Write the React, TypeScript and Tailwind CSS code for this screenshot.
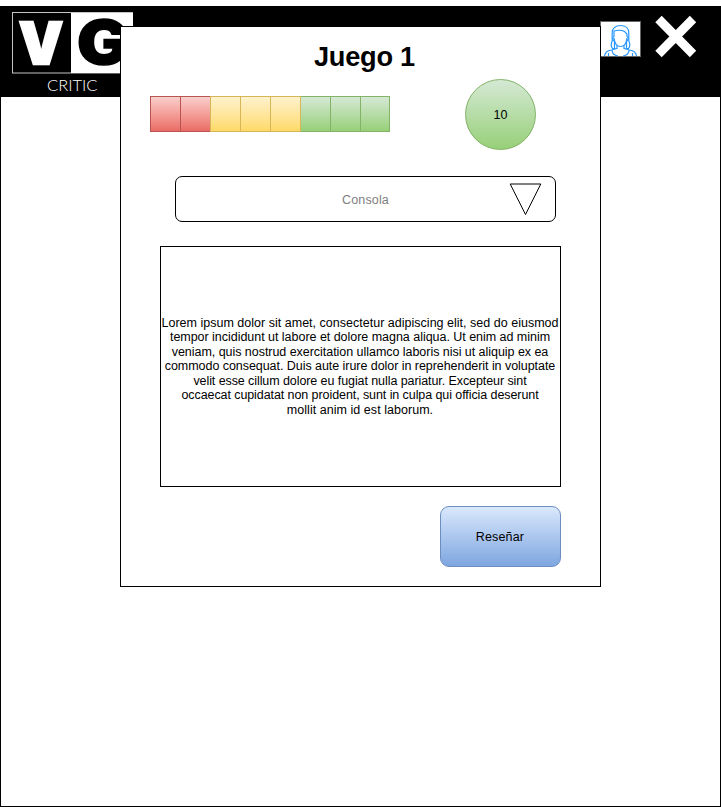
const segments = [
  'w-[30px] border-l border-[#b85450] from-[#f8cecc] to-[#ea6b66] border-y',
  'w-[30px] border-l border-[#b85450] from-[#f8cecc] to-[#ea6b66] border-y',
  'w-[30px] border-l border-[#d6b656] from-[#fff2cc] to-[#ffd966] border-y',
  'w-[30px] border-l border-[#d6b656] from-[#fff2cc] to-[#ffd966] border-y',
  'w-[31px] border-x border-[#d6b656] from-[#fff2cc] to-[#ffd966] border-y',
  'w-[29px] border-[#82b366] from-[#d5e8d4] to-[#97d077] border-y',
  'w-[30px] border-l border-[#82b366] from-[#d5e8d4] to-[#97d077] border-y',
  'w-[30px] border-x border-[#82b366] from-[#d5e8d4] to-[#97d077] border-y',
];

const loremLines = [
  { text: 'Lorem ipsum dolor sit amet, consectetur adipiscing elit, sed do eiusmod', tracking: 'tracking-[0.015px]' },
  { text: 'tempor incididunt ut labore et dolore magna aliqua. Ut enim ad minim', tracking: 'tracking-[-0.03px]' },
  { text: 'veniam, quis nostrud exercitation ullamco laboris nisi ut aliquip ex ea', tracking: 'tracking-[-0.04px]' },
  { text: 'commodo consequat. Duis aute irure dolor in reprehenderit in voluptate', tracking: 'tracking-[-0.05px]' },
  { text: 'velit esse cillum dolore eu fugiat nulla pariatur. Excepteur sint', tracking: 'tracking-[-0.08px]' },
  { text: 'occaecat cupidatat non proident, sunt in culpa qui officia deserunt', tracking: 'tracking-[-0.08px]' },
  { text: 'mollit anim id est laborum.', tracking: 'tracking-[0.04px]' },
];

function Logo() {
  return (
    <svg width="140" height="90" viewBox="0 6 140 90" className="block shrink-0">
      <rect x="12.5" y="12.5" width="120" height="60.5" fill="#000" stroke="#c4c4c4" />
      <rect x="71" y="13" width="62" height="60" fill="#fff" />
      <text x="19" y="63.5" textLength="44" lengthAdjust="spacingAndGlyphs" fill="#fff" stroke="#fff" strokeWidth="2.5" className="font-['Inter',sans-serif] text-[58px] font-black">V</text>
      <text x="77" y="64" textLength="52" lengthAdjust="spacingAndGlyphs" fill="#000" stroke="#000" strokeWidth="1.5" className="font-['Inter',sans-serif] text-[60px] font-black">G</text>
      <text x="47" y="90.5" textLength="50.5" lengthAdjust="spacingAndGlyphs" fill="#fff" className="font-['Lato',sans-serif] text-[15px] font-light">CRITIC</text>
    </svg>
  );
}

function Avatar() {
  return (
    <svg width="41" height="36" viewBox="0 0 41 36" className="block">
      <rect x=".5" y=".5" width="40" height="35" fill="#fff" stroke="#666" />
      <g fill="none" stroke="#2997ff" strokeWidth="1.2">
        <path d="M15.5 27.5H12.5C10.5 25 11.2 22 12.2 20V12C12.2 7 15.5 4.5 20.5 4.5S28.8 7 28.8 12V20C29.8 22 30.5 25 28.5 27.5H25.5" />
        <path d="M14 20C12.5 19 12.5 16 14 15.5V10C17 9 22 9 24.5 10.5L27 13V15.5C28.5 16 28.5 19 27 20" />
        <path d="M14 17C14.5 22 17 25.5 20.5 25.5S26.5 22 27 17" />
        <path d="M14.5 20V27M26.5 20V27M17 24.5V28M24 24.5V28" />
        <path d="M4.5 35C5 31 8 29.5 11.5 29L17 27.5M36.5 35C36 31 33 29.5 29.5 29L24 27.5" />
        <path d="M12 29C12 33 15 34.5 18 35M29 29C29 33 26 34.5 23 35M8.5 32V35M32.5 32V35" />
      </g>
    </svg>
  );
}

function Dialog() {
  return (
    <main className="absolute left-[120px] top-[26px] flex h-[561px] w-[481px] flex-col border border-black bg-white px-[39px]">
      <h1 className="mt-[13px] h-[34px] pl-2 text-center text-[27.2px] font-bold leading-[34px] tracking-[-0.25px]">Juego 1</h1>
      <div className="mt-[5px] flex h-[71px] items-start justify-between pr-[25px]">
        <div className="-ml-[10px] mt-[17px] flex h-9">
          {segments.map((segment, index) => (
            <div key={index} className={`h-9 bg-linear-to-b ${segment}`} />
          ))}
        </div>
        <div className="flex size-[71px] items-center justify-center rounded-full border border-[#82b366] bg-linear-to-b from-[#d5e8d4] to-[#97d077] pt-0.5">10</div>
      </div>
      <button className="relative ml-[15px] mt-[26px] flex h-[46px] w-[381px] items-center justify-center rounded-[7px] border border-black pt-[3px] tracking-[0.15px] text-[#808080]">
        Consola
        <svg width="34" height="36" viewBox="0 0 34 36" className="absolute right-[12px] top-[5px]">
          <path d="M1.2 2H31.8L16.5 32.5Z" fill="#fff" stroke="#000" />
        </svg>
      </button>
      <section className="mt-6 flex h-[241px] w-[401px] flex-col items-center justify-center whitespace-nowrap border border-black pr-px text-center leading-[14.4px]">
        {loremLines.map((line) => (
          <p key={line.text} className={line.tracking}>{line.text}</p>
        ))}
      </section>
      <button className="mt-[19px] h-[61px] w-[121px] self-end rounded-[9px] border border-[#6c8ebf] bg-linear-to-b from-[#dae8fc] to-[#7ea6e0] pr-px pt-0.5 tracking-[0.15px]">Reseñar</button>
    </main>
  );
}

export default function App() {
  return (
    <div className="relative h-[807px] w-[721px] bg-white pt-1.5 font-['Liberation_Sans',Arial,sans-serif] text-[12.5px] text-black">
      <div className="h-[801px] border border-black">
        <header className="-m-px flex h-[91px] items-start justify-between bg-black">
          <Logo />
          <div className="flex pr-6 pt-[9px]">
            <div className="mr-[14px] pt-[6px]"><Avatar /></div>
            <svg width="42" height="43" viewBox="0 0 42 43" className="block">
              <path d="M3.5 4L38 39M38 4L3.5 39" stroke="#fff" strokeWidth="9" />
            </svg>
          </div>
        </header>
      </div>
      <Dialog />
    </div>
  );
}
